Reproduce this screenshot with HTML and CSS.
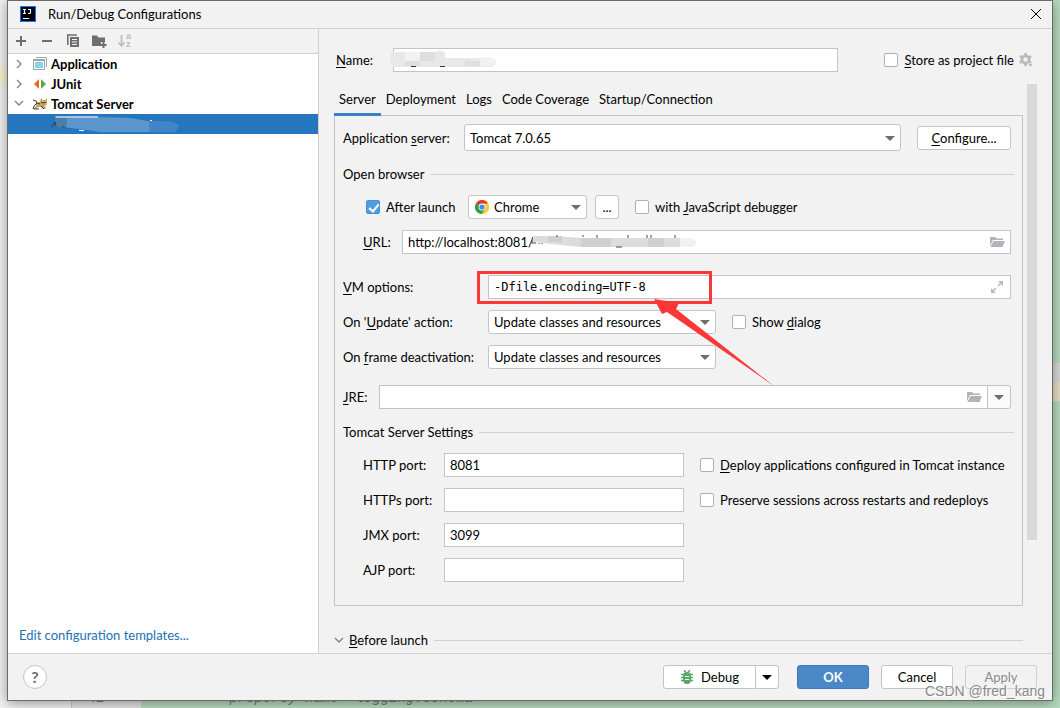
FILE: index.html
```html
<!DOCTYPE html>
<html lang="en">
<head>
    <meta charset="UTF-8">
    <meta name="viewport" content="width=device-width, initial-scale=1.0">
    <title>Run/Debug Configurations</title>
    <link rel="stylesheet" href="styles.css">
</head>
<body>
    <!-- Editor behind the dialog -->
    <div class="editor">
        <div class="editor-tree"></div>
        <div class="editor-gutter">42</div>
        <div class="editor-code">&lt;property name="logging.schema"</div>
    </div>

    <div class="dialog">
        <header class="titlebar">
            <svg class="app-icon" width="16" height="16" viewBox="0 0 16 16">
                <rect width="16" height="16" fill="#087cfa"/>
                <rect x="1" y="1" width="14" height="14" fill="#000"/>
                <path d="M3 3.500h3M4.500 3.500v4M3 7.500h3M8 3.500h2.500v3q0 1-1 1H8" fill="none" stroke="#fff" stroke-width="1.200"/>
                <path d="M3 12.500h6" stroke="#fff" stroke-width="1"/>
            </svg>
            <h1>Run/Debug Configurations</h1>
            <button class="close" type="button" aria-label="Close">
                <svg width="12" height="12" viewBox="0 0 12 12"><path d="M1 1l10 10M11 1L1 11" stroke="#000" stroke-width="1"/></svg>
            </button>
        </header>

        <div class="content">
            <aside class="sidebar">
                <div class="toolbar">
                    <button type="button" aria-label="Add"><svg width="16" height="16" viewBox="0 0 16 16"><path d="M8 3v10M3 8h10" stroke="#6e6e6e" stroke-width="2"/></svg></button>
                    <button type="button" aria-label="Remove"><svg width="16" height="16" viewBox="0 0 16 16"><path d="M3 8h10" stroke="#6e6e6e" stroke-width="2"/></svg></button>
                    <button type="button" aria-label="Copy">
                        <svg width="16" height="16" viewBox="0 0 16 16">
                            <path d="M2.800 12V2h9" fill="none" stroke="#6e6e6e" stroke-width="1.600"/>
                            <path d="M5 4h9v10H5z" fill="#6e6e6e"/>
                            <path d="M7 6.500h5M7 9h5M7 11.500h5" stroke="#f2f2f2" stroke-width="1"/>
                        </svg>
                    </button>
                    <button type="button" aria-label="New folder">
                        <svg width="16" height="16" viewBox="0 0 16 16">
                            <path d="M1 2.500h5l1.500 2H14V9h-4v4H1z" fill="#6e6e6e"/>
                            <path d="M12.500 9v6M9.500 12h6" stroke="#6e6e6e" stroke-width="2"/>
                        </svg>
                    </button>
                    <button type="button" aria-label="Sort" disabled>
                        <svg class="sort-icon" width="16" height="16" viewBox="0 0 16 16">
                            <path d="M4.500 2v10M1.500 9.500l3 3.500 3-3.500" fill="none" stroke="#bdbdbd" stroke-width="1.700"/>
                            <text x="9" y="6">a</text>
                            <text x="9" y="14">z</text>
                        </svg>
                    </button>
                </div>
                <ul class="tree">
                    <li>
                        <svg class="chevron" width="16" height="16" viewBox="0 0 16 16"><path d="M6 4l4 4-4 4" fill="none" stroke="#7f7f7f" stroke-width="1.300"/></svg>
                        <svg width="16" height="16" viewBox="0 0 16 16">
                            <path d="M4 1.500h10.500V11" fill="none" stroke="#9aa7b0"/>
                            <rect x="1.500" y="3.500" width="11" height="10" fill="#fff" stroke="#9aa7b0"/>
                            <path d="M1.500 4.500h11" stroke="#9aa7b0"/>
                            <rect x="3" y="6" width="8" height="6" fill="#87d3ee"/>
                        </svg>
                        <span>Application</span>
                    </li>
                    <li>
                        <svg class="chevron" width="16" height="16" viewBox="0 0 16 16"><path d="M6 4l4 4-4 4" fill="none" stroke="#7f7f7f" stroke-width="1.300"/></svg>
                        <svg width="16" height="16" viewBox="0 0 16 16"><path d="M7 3v10L2 8z" fill="#f26522"/><path d="M9 3v10l5-5z" fill="#59a846"/></svg>
                        <span>JUnit</span>
                    </li>
                    <li>
                        <svg class="chevron" width="16" height="16" viewBox="0 0 16 16"><path d="M4 5l4 4 4-4" fill="none" stroke="#7f7f7f" stroke-width="1.300"/></svg>
                        <svg width="16" height="16" viewBox="0 0 16 16">
                            <path d="M4 7l4-1 1-4 2 2h2l2-2v6l-2 2 1 3h-3l-2-2-3 0-2 2H1l3-3z" fill="#c9a55c"/>
                            <path d="M1 4l3 1 1 2-3 3-1 3M5 7l3 1M9 10l3 3M2 13h5M9 6l2 1 3-1" fill="none" stroke="#3b3a35" stroke-width="1"/>
                            <path d="M10 5h1M13 5h1" stroke="#f3e6b8"/>
                        </svg>
                        <span>Tomcat Server</span>
                    </li>
                    <li class="selected">
                        <svg width="132" height="18" viewBox="0 0 132 18">
                            <path d="M4 2L14 1 80 3 96 6 122 7 128 11 124 17 50 17 20 13 4 11z" fill="#5c96cd"/>
                            <path d="M4 1h43v2H6z" fill="#a5c4e2"/>
                            <path d="M4 3h12v9L4 11z" fill="#4a7fa8"/>
                            <path d="M98 6l24 1 6 4-4 6H98z" fill="#3f85c8"/>
                            <path d="M1 12l3-5 1 4M11 11l3 2" fill="none" stroke="#3b3a35"/>
                            <path d="M28 15.500h5M99 5.500h2" stroke="#fff"/>
                        </svg>
                    </li>
                </ul>
                <a class="templates" href="#">Edit configuration templates...</a>
            </aside>

            <main class="main">
                <div class="name-row">
                    <label for="name"><u>N</u>ame:</label>
                    <div class="field">
                        <input type="text" id="name">
                        <svg class="smudge smudge-name" width="108" height="18" viewBox="0 0 108 18">
                            <path d="M1 2h44q4-3 10 0v6h44q6 1 7 4-1 5-7 5H4q-4-1-4-5z" fill="#e8e8e9"/>
                            <path d="M15 11h15v5H15zM30 2h15v9H30zM75 11h15v5H75z" fill="#dfdddf"/>
                            <path d="M15 2h15v9H15zM90 7h9q6 1 7 4-1 5-7 5h-9z" fill="#f1f1f1"/>
                            <path d="M21 16.500h5M50 16.500h5" stroke="#333"/>
                        </svg>
                    </div>
                    <label class="check"><input type="checkbox"><span><u>S</u>tore as project file</span></label>
                    <svg class="gear" width="16" height="16" viewBox="0 0 16 16">
                        <circle cx="7.500" cy="7.500" r="3.600" fill="none" stroke="#b9b9b9" stroke-width="2.600"/>
                        <path d="M7.500 1v2.500M7.500 11.500V14M1.900 4.200l2 1.200M11 9.500l2 1.300M1.900 10.800l2-1.300M11 5.500l2-1.300" stroke="#b9b9b9" stroke-width="2.600"/>
                        <path d="M9.500 11.500h6l-3 3.500z" fill="#b9b9b9" stroke="#f2f2f2" stroke-width=".5"/>
                    </svg>
                </div>

                <div class="scroll">
                    <div class="scroll-body">
                        <nav class="tabs">
                            <button class="active" type="button">Server</button>
                            <button type="button">Deployment</button>
                            <button type="button">Logs</button>
                            <button type="button">Code Coverage</button>
                            <button type="button">Startup/Connection</button>
                        </nav>

                        <form class="panel">
                            <div class="row server-row">
                                <label class="w-server" for="server">Application <u>s</u>erver:</label>
                                <div class="combo grow"><select id="server"><option>Tomcat 7.0.65</option></select></div>
                                <button class="btn configure" type="button"><u>C</u>onfigure...</button>
                            </div>

                            <h2 class="section">Open browser</h2>
                            <div class="row">
                                <label class="check launch"><input type="checkbox" checked><span>After launch</span></label>
                                <div class="combo browser">
                                    <svg class="chrome" width="14" height="14" viewBox="0 0 14 14">
                                        <circle cx="7" cy="7" r="7" fill="#fc3"/>
                                        <path d="M7 7L.9 3.500A7 7 0 0 1 13.100 3.500z" fill="#e33b2e"/>
                                        <path d="M7 7l-6.100-3.500A7 7 0 0 0 7 14l3-5z" fill="#2ba24c"/>
                                        <path d="M7 3.500h6.100A7 7 0 0 1 7 14l3.200-5.200z" fill="#fc3"/>
                                        <circle cx="7" cy="7" r="3.400" fill="#fff"/>
                                        <circle cx="7" cy="7" r="2.600" fill="#4a86f0"/>
                                    </svg>
                                    <select aria-label="Browser"><option>Chrome</option></select>
                                </div>
                                <button class="btn dots" type="button">...</button>
                                <label class="check"><input type="checkbox"><span>with <u>J</u>avaScript debugger</span></label>
                            </div>
                            <div class="row">
                                <label class="w-url" for="url"><u>U</u>RL:</label>
                                <div class="field">
                                    <input type="text" id="url" value="http://localhost:8081/">
                                    <svg class="smudge smudge-url" width="168" height="16" viewBox="0 0 168 16">
                                        <path d="M3 3l20 0 30 2 105 0q7 1 8 4-1 5-8 5H50L3 9z" fill="#dcdcde"/>
                                        <path d="M18 3h14v6H18zM51 5h30v9H51zM118 5h16v9h-16z" fill="#cfcfd2"/>
                                        <path d="M150 5h8q7 1 8 4-1 5-8 5h-8z" fill="#f1f1f1"/>
                                        <path d="M2 7v3h4M9 10v1M12 10v1M27 2v2M53 2v2M67 2v3M98 2v3M117 2v3M121 2v3M145 2v3M86 14h6" fill="none" stroke="#444"/>
                                    </svg>
                                    <svg class="field-icon" width="16" height="16" viewBox="0 0 16 16"><path d="M1 3h5l1.500 1.500H14V6H4l-3 6z" fill="#aeb4b9"/><path d="M4.500 7H16l-2.500 6H1.500z" fill="#aeb4b9"/></svg>
                                </div>
                            </div>
                            <div class="row vm-row">
                                <label class="w-option" for="vm"><u>V</u>M options:</label>
                                <div class="field">
                                    <input class="mono" type="text" id="vm" value="-Dfile.encoding=UTF-8">
                                    <svg class="field-icon" width="16" height="16" viewBox="0 0 16 16"><path d="M9 2h5v5zM2 9v5h5z" fill="#b6bbc0"/><path d="M9 7l3-3M7 9l-3 3" stroke="#b6bbc0" stroke-width="1.500"/></svg>
                                    <!-- Red marker and arrow -->
                                    <svg class="marker" width="300" height="116" viewBox="0 0 300 116">
                                        <rect x="1.500" y="1.500" width="232" height="30" fill="none" stroke="#fc3736" stroke-width="3"/>
                                        <path d="M177 28l25 4-3 6 98 77-107-74-5 2z" fill="#fc3736"/>
                                    </svg>
                                </div>
                            </div>
                            <div class="row">
                                <label class="w-option" for="update">On '<u>U</u>pdate' action:</label>
                                <div class="combo action"><select id="update"><option>Update classes and resources</option></select></div>
                                <label class="check"><input type="checkbox"><span>Show <u>d</u>ialog</span></label>
                            </div>
                            <div class="row">
                                <label class="w-option" for="frame">On <u>f</u>rame deactivation:</label>
                                <div class="combo action"><select id="frame"><option>Update classes and resources</option></select></div>
                            </div>
                            <div class="row jre-row">
                                <label class="w-jre" for="jre"><u>J</u>RE:</label>
                                <div class="field">
                                    <input type="text" id="jre">
                                    <svg class="field-icon" width="16" height="16" viewBox="0 0 16 16"><path d="M1 3h5l1.500 1.500H14V6H4l-3 6z" fill="#aeb4b9"/><path d="M4.500 7H16l-2.500 6H1.500z" fill="#aeb4b9"/></svg>
                                </div>
                                <button class="drop" type="button" aria-label="Choose JRE"></button>
                            </div>

                            <h2 class="section">Tomcat Server Settings</h2>
                            <div class="settings">
                                <div class="ports">
                                    <label for="http">HTTP port:</label>
                                    <input type="text" id="http" value="8081">
                                    <label for="https">HTTPs port:</label>
                                    <input type="text" id="https">
                                    <label for="jmx">JMX port:</label>
                                    <input type="text" id="jmx" value="3099">
                                    <label for="ajp">AJP port:</label>
                                    <input type="text" id="ajp">
                                </div>
                                <div class="flags">
                                    <label class="check"><input type="checkbox"><span><u>D</u>eploy applications configured in Tomcat instance</span></label>
                                    <label class="check"><input type="checkbox"><span>Preserve sessions across restarts and redeploys</span></label>
                                </div>
                            </div>
                        </form>

                        <h2 class="section before">
                            <svg width="10" height="10" viewBox="0 0 10 10"><path d="M1 3l4 4 4-4" fill="none" stroke="#7f7f7f" stroke-width="1.300"/></svg>
                            <span><u>B</u>efore launch</span>
                        </h2>
                    </div>
                    <div class="scrollbar"></div>
                </div>
            </main>
        </div>

        <footer class="footer">
            <button class="help" type="button">?</button>
            <div class="split">
                <button class="btn debug" type="button">
                    <svg width="14" height="14" viewBox="0 0 14 14">
                        <path d="M4 0l2 2.500M10 0L8 2.500M1 4.500h12M1 7.500h12M1 10.500h12" stroke="#59a869" stroke-width="1.500"/>
                        <path d="M3 6q0-4 4-4t4 4v4q0 4-4 4t-4-4z" fill="#59a869"/>
                        <path d="M5 6.500h4M5 9.500h4" stroke="#fff"/>
                    </svg>
                    Debug
                </button>
                <button class="drop dark" type="button" aria-label="More run options"></button>
            </div>
            <button class="btn primary" type="button">OK</button>
            <button class="btn" type="button">Cancel</button>
            <button class="btn" type="button" disabled>Apply</button>
        </footer>
        <div class="watermark">CSDN @fred_kang</div>
    </div>
</body>
</html>
```
FILE: styles.css
```css
* {
    box-sizing: border-box;
}
body {
    margin: 0;
    padding: 0 7px;
    min-height: 100vh;
    background: #b8dcc0;
    color: #000;
    font: 13px/20px Lato, "Open Sans", sans-serif;
}
button, input, select {
    font: inherit;
    color: inherit;
    margin: 0;
}
button {
    padding: 0;
    border: none;
    background: none;
}
svg {
    display: block;
    flex: none;
}
u {
    text-underline-offset: 2px;
}

/* editor behind */
.editor {
    position: absolute;
    inset: 0;
    overflow: hidden;
    display: flex;
    align-items: stretch;
    color: #777;
    font: italic 14px/20px "Liberation Mono", monospace;
    background: linear-gradient(#d9d9d9, #d9d9d9) right 363px / 10px 19px no-repeat, linear-gradient(#e6dfc4, #e6dfc4) right 382px / 10px 19px no-repeat;
}
.editor-tree {
    width: 72px;
    background: linear-gradient(#f5f3d2, #f5f3d2) 0 67px / 100% 19px no-repeat #f2f2f2;
    border-right: 1px solid #ccc;
}
.editor-gutter {
    width: 69px;
    padding-left: 16px;
    background: #e4e4e4;
    display: flex;
    align-items: flex-end;
}
.editor-code {
    padding-left: 80px;
    display: flex;
    align-items: flex-end;
    white-space: pre;
}

/* dialog */
.dialog {
    position: relative;
    display: flex;
    flex-direction: column;
    min-height: calc(100vh - 7px);
    background: #f2f2f2;
    border: 1px solid #6b6b6b;
    box-shadow: 0 2px 12px rgba(0, 0, 0, 0.4);
}
.titlebar {
    display: flex;
    align-items: center;
    height: 28px;
    padding: 0 10px 2px 12px;
    border-bottom: 1px solid #d1d1d1;
}
.titlebar h1 {
    flex: 1;
    margin: 0 0 0 12px;
    font-size: 13px;
    font-weight: normal;
}
.content {
    flex: 1;
    display: flex;
}

/* sidebar */
.sidebar {
    flex: none;
    width: 311px;
    display: flex;
    flex-direction: column;
    background: #fff;
    border-right: 1px solid #d1d1d1;
}
.toolbar {
    display: flex;
    height: 25px;
    background: #f2f2f2;
    border-bottom: 1px solid #d1d1d1;
}
.toolbar button {
    width: 26px;
    display: flex;
    align-items: center;
    justify-content: center;
}
.sort-icon {
    font: bold 9px/9px "Liberation Sans", sans-serif;
    fill: #bdbdbd;
    overflow: visible;
}
.tree {
    flex: 1;
    margin: 0;
    padding: 0;
    list-style: none;
    font-weight: bold;
}
.tree li {
    display: flex;
    align-items: center;
    height: 20px;
    padding-left: 3px;
    gap: 3px;
}
.tree .chevron {
    margin-right: 2px;
}
.tree .selected {
    padding-left: 43px;
    background: #2675bf;
}
.templates {
    padding: 0 11px 8px;
    color: #2470b3;
    text-decoration: none;
}

/* right side */
.main {
    flex: 1;
    min-width: 0;
    display: flex;
    flex-direction: column;
    padding: 19px 15px 0;
}
.name-row {
    display: flex;
    align-items: center;
    height: 24px;
    padding: 0 3px 0 2px;
}
.name-row > label:first-child {
    width: 57px;
}
.name-row .check {
    margin-left: 46px;
}
.gear {
    margin-left: 4px;
}
.field {
    position: relative;
    flex: 1;
}
input[type="text"] {
    display: block;
    width: 100%;
    height: 24px;
    padding: 0 5px;
    border: 1px solid #c4c4c4;
    background: #fff;
}
input.mono {
    font-family: "DejaVu Sans Mono", monospace;
    font-size: 12px;
}
.field-icon {
    position: absolute;
    right: 6px;
    top: 4px;
}
.smudge {
    position: absolute;
}
.smudge-name {
    left: -3px;
    top: 2px;
}
.smudge-url {
    left: 128px;
    top: 3px;
}
.marker {
    position: absolute;
    left: -11px;
    top: -4px;
    pointer-events: none;
    z-index: 1;
}
.check {
    display: flex;
    align-items: center;
    gap: 6px;
    white-space: nowrap;
}
.check input {
    appearance: none;
    width: 14px;
    height: 14px;
    border: 1px solid #b0b0b0;
    border-radius: 2px;
    background: #fff;
}
.check input:checked {
    position: relative;
    background: #4f9ee3;
    border-color: #4791d2;
}
.check input:checked::after {
    content: "";
    position: absolute;
    left: 4px;
    top: 1px;
    width: 4px;
    height: 8px;
    border: solid #fff;
    border-width: 0 2px 2px 0;
    transform: rotate(40deg);
}
.combo {
    position: relative;
}
.combo select {
    appearance: none;
    display: block;
    width: 100%;
    height: 24px;
    padding: 0 24px 0 5px;
    border: 1px solid #c4c4c4;
    border-radius: 3px;
    background: #fff;
}
.combo::after {
    content: "";
    position: absolute;
    right: 6px;
    top: calc(50% - 2px);
    border: solid transparent;
    border-width: 5px 5px 0;
    border-top-color: #6e6e6e;
    pointer-events: none;
}
.btn {
    min-width: 72px;
    height: 24px;
    border: 1px solid #c4c4c4;
    border-radius: 3px;
    background: #fff;
}
.btn:disabled {
    background: #f2f2f2;
    border-color: #cfcfcf;
    color: #8c8c8c;
}
.drop {
    display: flex;
    align-items: center;
    justify-content: center;
    align-self: stretch;
    width: 23px;
    border: 1px solid #c4c4c4;
    border-left: none;
    border-radius: 0 3px 3px 0;
    background: #fafafa;
}
.drop::after {
    content: "";
    border: solid transparent;
    border-width: 5px 5px 0;
    border-top-color: #6e6e6e;
}
.drop.dark {
    background: #fff;
}
.drop.dark::after {
    border-top-color: #000;
}

/* tabs and panel */
.scroll {
    flex: 1;
    display: flex;
    margin-top: 12px;
}
.scroll-body {
    flex: 1;
    min-width: 0;
}
.scrollbar {
    width: 10px;
    height: 456px;
    margin-left: 4px;
    background: #d9d9d9;
}
.tabs {
    display: flex;
    height: 31px;
}
.tabs button {
    padding: 0 5px 2px;
}
.tabs .active {
    position: relative;
    border-bottom: 3px solid #3d7fc6;
    padding-top: 2px;
    height: 32px;
}
.panel {
    height: 491px;
    padding: 8px 11px 0 8px;
    border: 1px solid #c4c4c4;
}
.row {
    display: flex;
    align-items: center;
    height: 24px;
    margin-bottom: 11px;
}
.w-server {
    width: 121px;
}
.w-url {
    width: 59px;
    padding-left: 20px;
}
.w-option {
    width: 145px;
}
.w-jre {
    width: 36px;
}
.grow {
    flex: 1;
}
.server-row {
    height: 27px;
    margin-bottom: 13px;
}
.server-row select {
    height: 27px;
}
.configure {
    width: 94px;
    margin-left: 16px;
}
.section {
    display: flex;
    align-items: center;
    gap: 6px;
    margin: 0 -3px 11px 0;
    font-size: 13px;
    font-weight: normal;
}
.section::after {
    content: "";
    flex: 1;
    height: 1px;
    background: #d1d1d1;
}
.launch {
    width: 125px;
    padding-left: 23px;
}
.browser {
    width: 119px;
}
.browser select {
    padding-left: 25px;
}
.chrome {
    position: absolute;
    left: 7px;
    top: 5px;
}
.dots {
    min-width: 24px;
    margin: 0 16px 0 8px;
}
.vm-row {
    margin-top: 21px;
}
.action {
    width: 228px;
    margin-right: 16px;
}
.jre-row {
    margin: 16px 0 13px;
}
.settings {
    display: flex;
    gap: 16px;
    margin-right: -4px;
    padding-left: 20px;
}
.ports {
    display: grid;
    grid-template-columns: 81px 240px;
    row-gap: 11px;
    align-items: center;
}
.flags {
    display: grid;
    align-content: start;
    gap: 11px;
}
.flags .check {
    height: 24px;
}
.before {
    margin: 24px 0 3px;
}
.before span {
    margin-left: -1px;
}

/* bottom bar */
.footer {
    display: flex;
    align-items: center;
    gap: 12px;
    height: 47px;
    padding: 0 15px;
    border-top: 1px solid #d1d1d1;
}
.help {
    width: 24px;
    height: 24px;
    margin-right: auto;
    border: 1px solid #c4c4c4;
    border-radius: 50%;
    background: #fff;
    color: #6e6e6e;
    font-size: 16px;
    font-weight: bold;
}
.split {
    display: flex;
    margin-right: 6px;
}
.debug {
    display: flex;
    align-items: center;
    justify-content: center;
    gap: 7px;
    width: 93px;
    border-radius: 3px 0 0 3px;
}
.primary {
    background: #4a88c7;
    border-color: #3f79b5;
    color: #fff;
    font-weight: bold;
}
.watermark {
    position: absolute;
    right: 7px;
    bottom: -1px;
    color: #8a8a8a;
    font: 14px/20px "Liberation Sans", Arial, sans-serif;
    text-shadow: 1px 1px #fff;
    pointer-events: none;
}
```
